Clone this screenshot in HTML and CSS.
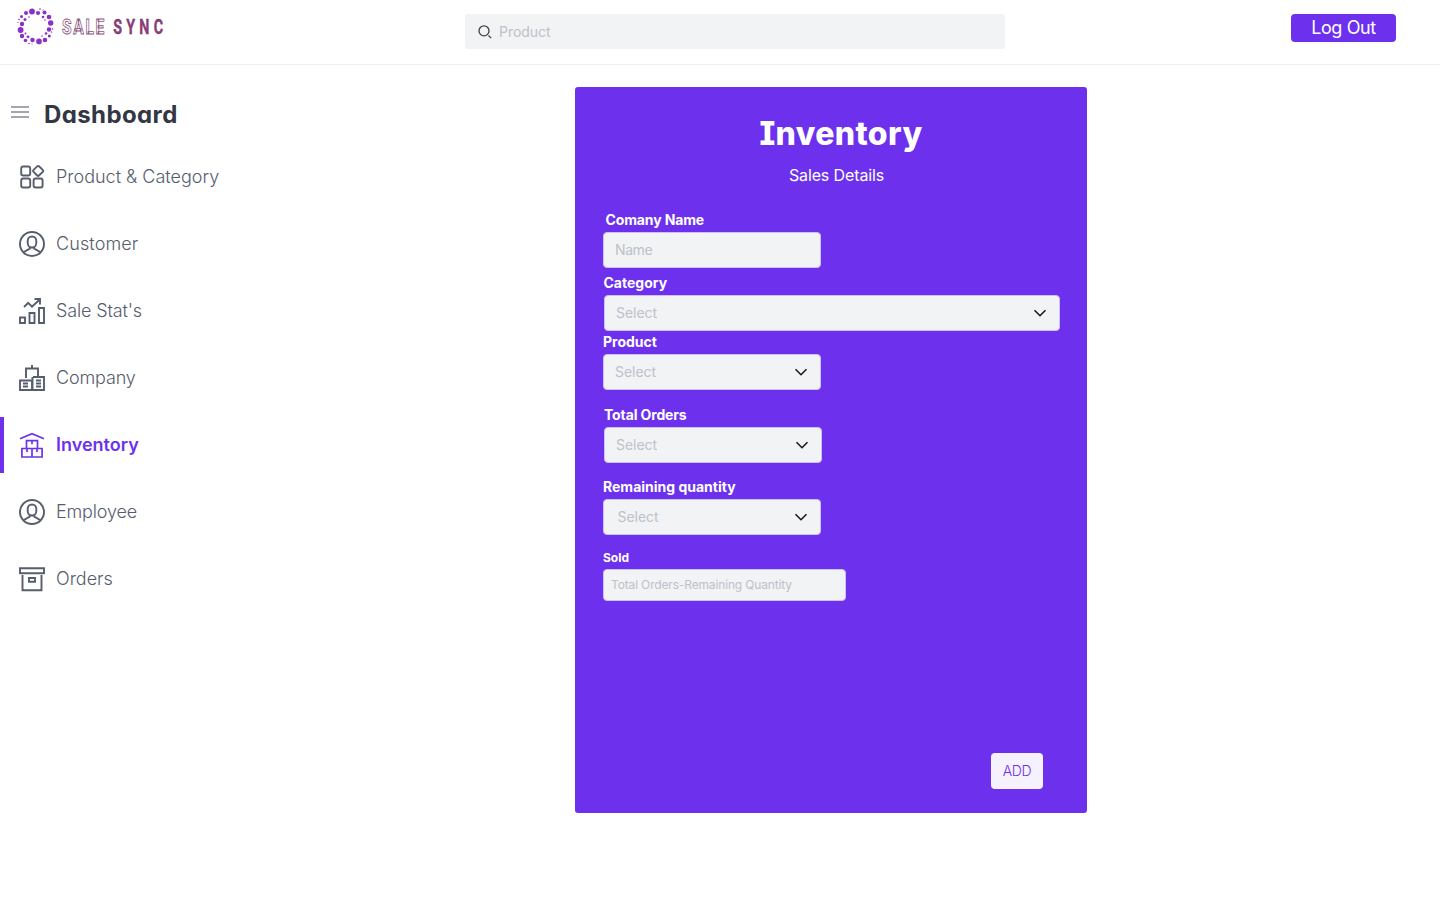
FILE: index.html
```html
<!DOCTYPE html>
<html lang="en">
<head>
<meta charset="utf-8">
<title>Sale Sync</title>
<link rel="stylesheet" href="styles.css">
</head>
<body>
<header class="topbar">
  <svg class="logo" width="150" height="42" viewBox="0 0 150 42">
    <g fill="#8a2fc9">
      <circle cx="16" cy="6.500" r="2.900"/><circle cx="22" cy="8" r="2.100"/><circle cx="10" cy="8" r="2"/><circle cx="5.500" cy="11.500" r="1.500"/>
      <circle cx="33" cy="12" r="2.300"/><circle cx="28.500" cy="7.500" r="2"/><circle cx="34.700" cy="18" r="2.700"/><circle cx="33" cy="24.500" r="2.200"/>
      <circle cx="33.300" cy="31" r="1.500"/><circle cx="29" cy="35" r="2.300"/><circle cx="23" cy="36.400" r="2.800"/><circle cx="16.500" cy="35" r="2.200"/>
      <circle cx="9.500" cy="35.500" r="1.800"/><circle cx="6" cy="31" r="2.200"/><circle cx="4.600" cy="25" r="2.900"/><circle cx="6" cy="19" r="2.200"/>
      <circle cx="9" cy="14.500" r="1.500"/><circle cx="27" cy="12" r="1.300"/><circle cx="30" cy="28.500" r="1.300"/><circle cx="12" cy="31.800" r="1.400"/>
      <circle cx="9.500" cy="28.500" r="1"/><circle cx="13" cy="12" r=".8"/><circle cx="29" cy="15" r=".8"/><circle cx="26" cy="31" r=".8"/>
      <circle cx="3" cy="14.500" r=".8"/><circle cx="2" cy="17.500" r=".6"/><circle cx="24" cy="4" r=".8"/><circle cx="27" cy="5" r=".6"/>
      <circle cx="36.500" cy="24" r=".8"/><circle cx="35.500" cy="27" r=".7"/><circle cx="13" cy="38.500" r=".8"/><circle cx="16" cy="39" r=".6"/>
    </g>
    <text class="logo-text logo-sale" transform="translate(46 29) scale(.76 1)">SALE</text>
    <text class="logo-text logo-sync" transform="translate(97.200 29) scale(.7 1)">SYNC</text>
  </svg>
  <div class="search">
    <svg width="16" height="16" viewBox="0 0 16 16" fill="none" stroke="#3d4046" stroke-width="1.300"><circle cx="7" cy="6.800" r="5"/><path d="M11.500 11.500l2.600 2.600"/></svg>
    <span>Product</span>
  </div>
  <button class="logout">Log Out</button>
</header>
<div class="page">
  <nav class="sidebar">
    <div class="sidebar-head">
      <svg width="18" height="14" viewBox="0 0 18 14" stroke="#85879a" stroke-width="1.700"><path d="M0 2h18M0 7h18M0 12h18"/></svg>
      <h2>Dashboard</h2>
    </div>
    <a class="item"><svg class="icon" viewBox="0 0 26 26"><rect x="2.200" y="2.500" width="9" height="9" rx="2"/><rect x="2.200" y="14.500" width="9" height="9" rx="2"/><rect x="14.600" y="14.500" width="9" height="9" rx="2"/><path d="M18.200 2.300 14.600 5.900q-1 1 0 2l3.600 3.600q.9.900 1.800 0l3.700-3.600q1-1 0-2L20 2.300q-.9-.8-1.800 0z"/></svg><span>Product &amp; Category</span></a>
    <a class="item"><svg class="icon" viewBox="0 0 26 26"><circle cx="13" cy="13" r="12"/><path d="M8.700 9.800a4.300 4.300 0 0 1 8.600 0v2.200c0 2.300-1.700 4.500-4.300 4.500s-4.300-2.200-4.300-4.500zM4.500 21.200l6.200-3.600v-2M21.500 21.200l-6.200-3.600v-2"/></svg><span class="wide">Customer</span></a>
    <a class="item"><svg class="icon" viewBox="0 0 26 26"><path d="M1 19.500h5V25H1zM10.500 15h5v10h-5zM20 10h5v15h-5zM5 9l4.200-4.200 3.800 3.900L21 1.200M15.500 1H21v5.500"/></svg><span class="tight">Sale Stat's</span></a>
    <a class="item"><svg class="icon" viewBox="0 0 26 26"><path d="M1 15.500h12V25H1zM14 12h11v13H13.500V12M7 13V3.500h12V11M13 0v3.500M4 18.500h5M4 21.500h5M17 15.500h5M17 18.500h5M17 21.500h5"/></svg><span class="tight">Company</span></a>
    <a class="item active"><svg class="icon" viewBox="0 0 26 26"><path d="M1 6.800 13 1.600l12 5.200M7.500 8.700h11v7.800h-11zM2.900 16.500h20.200V25H2.900zM13 16.500V25M13 8.700v3.500M8 16.500V20M18 16.500V20"/></svg><span>Inventory</span></a>
    <a class="item"><svg class="icon" viewBox="0 0 26 26"><circle cx="13" cy="13" r="12"/><path d="M8.700 9.800a4.300 4.300 0 0 1 8.600 0v2.200c0 2.300-1.700 4.500-4.300 4.500s-4.300-2.200-4.300-4.500zM4.500 21.200l6.200-3.600v-2M21.500 21.200l-6.200-3.600v-2"/></svg><span class="tight">Employee</span></a>
    <a class="item"><svg class="icon" viewBox="0 0 26 26"><path d="M1 2.300h24v5H1zM3.500 9v15.300h19V9M10 12h6v3.800h-6z"/></svg><span>Orders</span></a>
  </nav>
  <main class="card">
    <h1>Inventory</h1>
    <p class="subtitle">Sales Details</p>
    <div class="field company"><label>Comany Name</label><div class="box"><span>Name</span></div></div>
    <div class="field category"><label>Category</label><div class="box"><span>Select</span><svg class="chev" viewBox="0 0 14 8"><path d="M1.500 1.200 7 6.700l5.500-5.500"/></svg></div></div>
    <div class="field product"><label>Product</label><div class="box"><span>Select</span><svg class="chev" viewBox="0 0 14 8"><path d="M1.500 1.200 7 6.700l5.500-5.500"/></svg></div></div>
    <div class="field total"><label>Total Orders</label><div class="box"><span>Select</span><svg class="chev" viewBox="0 0 14 8"><path d="M1.500 1.200 7 6.700l5.500-5.500"/></svg></div></div>
    <div class="field remaining"><label>Remaining quantity</label><div class="box"><span>Select</span><svg class="chev" viewBox="0 0 14 8"><path d="M1.500 1.200 7 6.700l5.500-5.500"/></svg></div></div>
    <div class="field sold"><label>Sold</label><div class="box"><span>Total Orders-Remaining Quantity</span></div></div>
    <button class="add">ADD</button>
  </main>
</div>
</body>
</html>
```
FILE: styles.css
```css
* { box-sizing: border-box; }
body { margin: 0; height: 900px; background: #fff; font-family: Inter, "Liberation Sans", sans-serif; overflow: hidden; }
h1, h2, p { margin: 0; }
button { border: 0; padding: 0; font-family: inherit; }
svg { display: block; flex: none; }

.topbar { display: flex; align-items: flex-start; height: 65px; border-bottom: 1px solid #efeff1; padding-left: 16px; }
.logo { margin-top: 5px; }
.logo-text { font-family: Roboto, sans-serif; font-weight: 700; font-size: 20.5px; }
.logo-sale { fill: #fff; stroke: #8d5580; stroke-width: .9px; letter-spacing: 2.2px; }
.logo-sync { fill: #8d3d7c; stroke: #6a2058; stroke-width: .3px; letter-spacing: 6px; }
.search { display: flex; align-items: center; gap: 6px; width: 540px; height: 35px; margin: 14px 0 0 299px; padding-left: 12px; background: #f2f3f5; border-radius: 3px; color: #bdc1ca; font-size: 14px; letter-spacing: -.05px; }
.logout { width: 105px; height: 28px; margin: 14px 0 0 286px; background: #6d31ed; border-radius: 4px; color: #fff; font-size: 18px; letter-spacing: -.4px; line-height: 28px; }

.page { display: flex; }
.sidebar { width: 575px; padding-top: 28px; }
.sidebar-head { display: flex; align-items: center; gap: 15px; height: 44px; margin-bottom: 12px; padding-left: 11px; }
.sidebar-head svg { margin-top: -6px; }
.sidebar-head h2 { font-size: 24px; line-height: 36px; font-weight: 700; letter-spacing: .4px; color: #323743; font-feature-settings: "cv11"; }
.item { display: flex; align-items: center; gap: 11px; height: 56px; margin-bottom: 11px; padding-left: 15px; border-left: 4px solid transparent; color: #565d6d; font-size: 18px; font-weight: 300; line-height: 28px; }
.item.active { border-color: #6d31ed; color: #6d31ed; font-weight: 600; }
.wide { letter-spacing: .12px; }
.tight { letter-spacing: -.15px; }
.icon { width: 26px; height: 26px; fill: none; stroke: currentColor; stroke-width: 1.9; }
.active .icon { stroke-width: 1.7; }

.card { display: flex; flex-direction: column; width: 512px; height: 726px; margin-top: 22px; padding: 23px 27px 24px 28px; background: #6d31ed; border-radius: 3px; color: #fff; }
.card h1 { margin-left: 19px; text-align: center; font-size: 32px; line-height: 48px; font-weight: 800; letter-spacing: .4px; font-feature-settings: "cv08"; }
.subtitle { margin: 4px 0 24px 10px; text-align: center; font-size: 16px; line-height: 26px; letter-spacing: -.12px; }
.field label { display: block; height: 16px; margin-bottom: 4px; font-size: 14px; line-height: 16px; font-weight: 700; letter-spacing: -.13px; }
.box { display: flex; align-items: center; justify-content: space-between; width: 218px; height: 36px; padding: 0 12px 0 11px; background: #f2f3f5; border: 1px solid #d0bff6; border-radius: 4px; color: #bdc1ca; font-size: 14px; }
.box span { margin-top: -1px; letter-spacing: -.05px; }
.chev { width: 14px; height: 8px; fill: none; stroke: #171a1f; stroke-width: 1.6; }
.company label { padding-left: 2.5px; }
.company .box span { letter-spacing: -.4px; }
.company { margin-bottom: 7px; }
.category { margin-bottom: 3px; }
.category .box { width: 456px; }
.category, .total { padding-left: 1px; }
.category label { margin-left: -.5px; }
.category label, .product label, .remaining label { letter-spacing: 0; }
.product { margin-bottom: 17px; }
.total { margin-bottom: 16px; }
.remaining { margin-bottom: 15px; }
.remaining .box { padding-left: 13.5px; }
.sold label { margin-bottom: 3px; font-size: 12px; letter-spacing: 0; }
.sold .box { width: 243px; height: 32px; padding-left: 7px; font-size: 12px; }
.sold .box span { letter-spacing: -.15px; }
.add { width: 52px; height: 36px; margin: auto 17px 0 auto; padding-bottom: 1px; background: #f5f1fe; border-radius: 4px; color: #6d31ed; font-size: 14px; font-weight: 300; letter-spacing: -.4px; }
```
